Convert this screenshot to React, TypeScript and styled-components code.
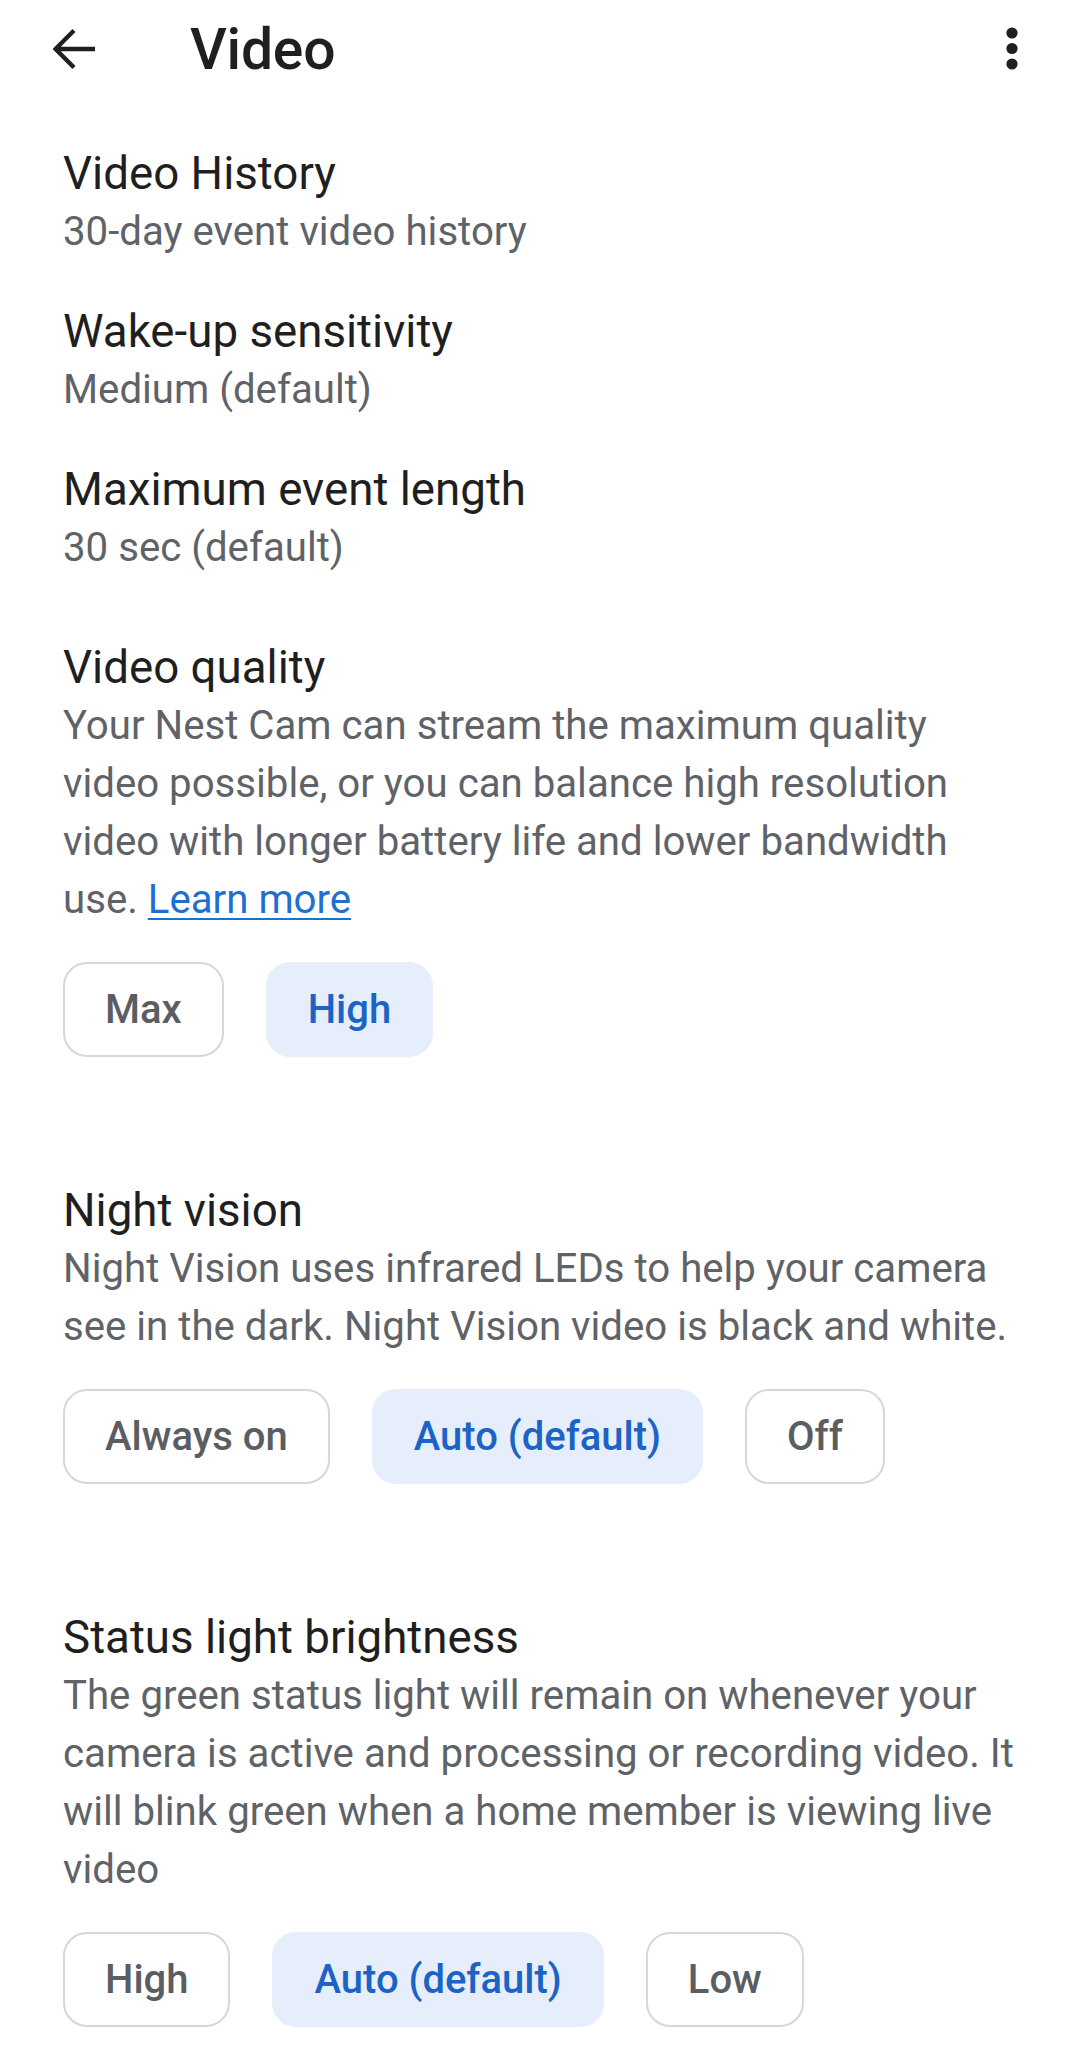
import React, { useState } from "react";
import styled, { createGlobalStyle } from "styled-components";

const GlobalStyle = createGlobalStyle`
  html, body {
    margin: 0;
    padding: 0;
    background: #ffffff;
  }
  body {
    font-family: Roboto, "Noto Sans", "Liberation Sans", sans-serif;
    -webkit-font-smoothing: antialiased;
  }
`;

const Page = styled.div`
  width: 1080px;
  min-height: 2064px;
  background: #ffffff;
  color: #1f1f1f;
`;

const TopBar = styled.header`
  display: flex;
  align-items: center;
  height: 98px;
  padding: 0 46px 0 53px;
`;

const IconButton = styled.button`
  display: flex;
  align-items: center;
  justify-content: center;
  padding: 0;
  margin: 0;
  border: none;
  background: none;
  color: #1f1f1f;
  cursor: pointer;
`;

const BarTitle = styled.h1`
  flex: 1;
  margin: 0 0 0 95px;
  font-size: 57px;
  font-weight: 500;
  letter-spacing: -0.2px;
  color: #1f1f1f;
`;

const Content = styled.main`
  padding: 26px 30px 0 63px;
`;

const Item = styled.div`
  padding: 21px 0;
`;

const Section = styled.section<{ $top: number }>`
  padding-top: ${(p) => p.$top}px;
`;

const Title = styled.div`
  font-size: 45.7px;
  line-height: 58px;
  color: #1f1f1f;
`;

const Sub = styled.div`
  font-size: 40.2px;
  line-height: 58px;
  color: #5f6368;
`;

const Link = styled.a`
  color: #1f6fd1;
  text-decoration: underline;
  text-underline-offset: 5px;
  text-decoration-thickness: 2px;
`;

const ChipRow = styled.div`
  display: flex;
  gap: 42px;
  margin-top: 33px;
`;

const Chip = styled.button<{ $selected?: boolean }>`
  box-sizing: border-box;
  height: 95px;
  padding: 0 40px;
  border-radius: 24px;
  border: 2px solid ${(p) => (p.$selected ? "#e6eefb" : "#d6d7d9")};
  background: ${(p) => (p.$selected ? "#e6eefb" : "#ffffff")};
  color: ${(p) => (p.$selected ? "#1b63c6" : "#5a5d61")};
  font-family: Roboto, "Noto Sans", sans-serif;
  font-size: 40px;
  font-weight: 500;
  cursor: pointer;
`;

const BackArrow = () => (
  <svg width="42" height="42" viewBox="0 0 42 42" fill="none">
    <path
      d="M42 21H3.5M21 2.5L2.5 21 21 39.5"
      stroke="currentColor"
      strokeWidth="4.4"
      strokeLinecap="butt"
      strokeLinejoin="miter"
    />
  </svg>
);

const MoreDots = () => (
  <svg width="44" height="64" viewBox="0 0 44 64" fill="currentColor">
    <circle cx="22" cy="16" r="5.6" />
    <circle cx="22" cy="31.5" r="5.6" />
    <circle cx="22" cy="47" r="5.6" />
  </svg>
);

interface ChipGroupProps {
  options: string[];
  initial: number;
}

const ChipGroup: React.FC<ChipGroupProps> = ({ options, initial }) => {
  const [selected, setSelected] = useState(initial);
  return (
    <ChipRow>
      {options.map((opt, idx) => (
        <Chip key={opt} $selected={idx === selected} onClick={() => setSelected(idx)}>
          {opt}
        </Chip>
      ))}
    </ChipRow>
  );
};

const App: React.FC = () => (
  <Page>
    <GlobalStyle />
    <TopBar>
      <IconButton aria-label="Back">
        <BackArrow />
      </IconButton>
      <BarTitle>Video</BarTitle>
      <IconButton aria-label="More options">
        <MoreDots />
      </IconButton>
    </TopBar>

    <Content>
      <Item>
        <Title>Video History</Title>
        <Sub>30-day event video history</Sub>
      </Item>
      <Item>
        <Title>Wake-up sensitivity</Title>
        <Sub>Medium (default)</Sub>
      </Item>
      <Item>
        <Title>Maximum event length</Title>
        <Sub>30 sec (default)</Sub>
      </Item>

      <Section $top={41}>
        <Title>Video quality</Title>
        <Sub>
          Your Nest Cam can stream the maximum quality
          <br />
          video possible, or you can balance high resolution
          <br />
          video with longer battery life and lower bandwidth
          <br />
          use. <Link href="#">Learn more</Link>
        </Sub>
        <ChipGroup options={["Max", "High"]} initial={1} />
      </Section>

      <Section $top={125}>
        <Title>Night vision</Title>
        <Sub>
          Night Vision uses infrared LEDs to help your camera
          <br />
          see in the dark. Night Vision video is black and white.
        </Sub>
        <ChipGroup options={["Always on", "Auto (default)", "Off"]} initial={1} />
      </Section>

      <Section $top={125}>
        <Title>Status light brightness</Title>
        <Sub>
          The green status light will remain on whenever your
          <br />
          camera is active and processing or recording video. It
          <br />
          will blink green when a home member is viewing live
          <br />
          video
        </Sub>
        <ChipGroup options={["High", "Auto (default)", "Low"]} initial={1} />
      </Section>
    </Content>
  </Page>
);

export default App;
